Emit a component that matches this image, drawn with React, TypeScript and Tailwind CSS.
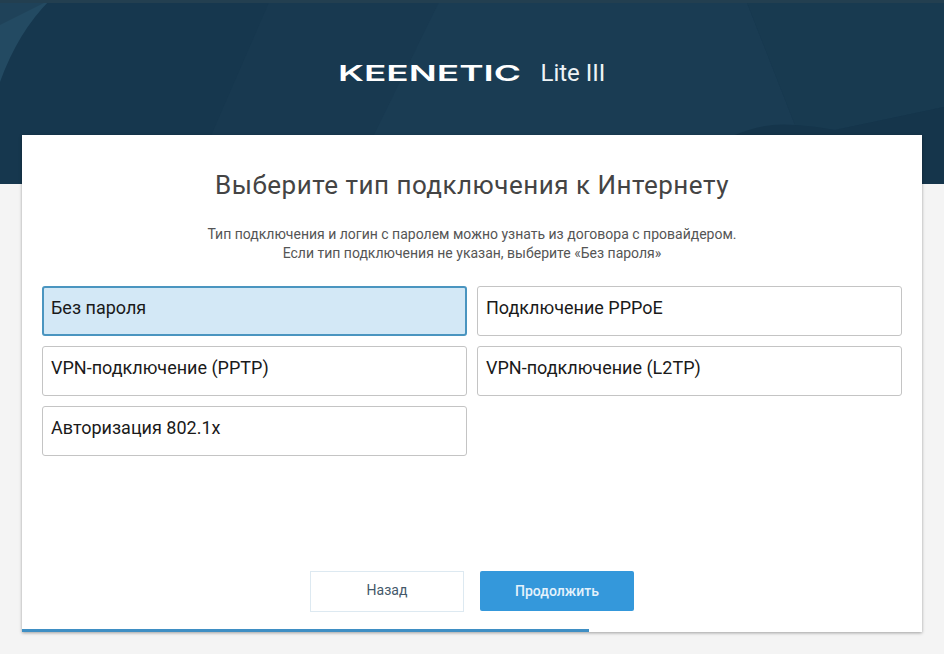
const options = [
  { label: "Без пароля", selected: true },
  { label: "Подключение PPPoE" },
  { label: "VPN-подключение (PPTP)" },
  { label: "VPN-подключение (L2TP)" },
  { label: "Авторизация 802.1x" },
];

function HeaderFacets() {
  return (
    <svg className="absolute inset-0 h-full w-full" viewBox="0 0 944 184" preserveAspectRatio="none" aria-hidden="true">
      <rect width="944" height="184" fill="#16374e" />
      <polygon points="270,0 746,0 795,135 235,135 235,184 190,184" fill="#183950" />
      <polygon points="440,0 746,0 795,125 740,135 380,184 350,184" fill="#1a3c53" />
      <polygon points="746,0 944,0 944,107 835,130 795,125" fill="#183a50" />
      <path d="M0 82 Q18 32 50 0 L0 0 Z" fill="#234a62" />
      <path d="M0 25 L50 0 L0 0 Z" fill="#1f4259" />
      <path d="M735 135 Q765 122 795 125 Q815 126 835 130 L944 107 L944 184 L735 184 Z" fill="#15354b" />
      <rect width="944" height="3" fill="#233f50" />
    </svg>
  );
}

export default function App() {
  return (
    <div className="min-h-[654px] bg-[#f4f4f4] font-['Roboto',sans-serif]">
      <header className="relative flex h-[184px] justify-center overflow-hidden">
        <HeaderFacets />
        <div className="relative flex h-[146px] w-[265px] items-center">
          <span className="-ml-[2px] w-[107px] origin-left scale-x-[1.68] font-['Inter',sans-serif] text-[22px] font-semibold leading-none text-white">
            KEENETIC
          </span>
          <span className="ml-[96px] whitespace-nowrap text-[24px] leading-none text-[#eef3f6]">Lite III</span>
        </div>
      </header>
      <main className="relative mx-[22px] -mt-[49px] flex h-[497px] flex-col bg-white shadow-[0_1px_3px_rgba(0,0,0,0.35)]">
        <h1 className="mt-[32px] text-center text-[26px] font-normal leading-[36px] tracking-[0.5px] text-[#444]">
          Выберите тип подключения к Интернету
        </h1>
        <p className="mt-[22px] text-center text-[14px] leading-[19px] text-[#555]">
          Тип подключения и логин с паролем можно узнать из договора с провайдером.
          <br />
          Если тип подключения не указан, выберите «Без пароля»
        </p>
        <div className="mx-[20px] mt-[23px] grid grid-cols-2 gap-[10px]">
          {options.map((o) =>
            o.selected ? (
              <div key={o.label} className="h-[50px] rounded-[3px] border-2 border-[#4a95c0] bg-[#d3e8f6] px-[7px] pt-[9px] text-[18px] leading-[21px] text-[#1a1a1a]">
                {o.label}
              </div>
            ) : (
              <div key={o.label} className="h-[50px] rounded-[3px] border border-[#c4c4c4] bg-white px-[8px] pt-[10px] text-[18px] leading-[21px] text-[#1a1a1a]">
                {o.label}
              </div>
            ),
          )}
        </div>
        <div className="mt-auto flex items-start justify-center gap-[16px] pb-[20px]">
          <button className="h-[41px] w-[154px] border border-[#dde9f1] bg-white pb-[3px] text-[14px] text-[#44586a]">Назад</button>
          <button className="h-[40px] w-[154px] rounded-[2px] bg-[#3498db] text-[14px] font-medium text-[#e4f2fb]">Продолжить</button>
        </div>
        <div className="absolute bottom-0 left-0 h-[3px] w-[567px] bg-[#3f8fc4]" />
      </main>
    </div>
  );
}
